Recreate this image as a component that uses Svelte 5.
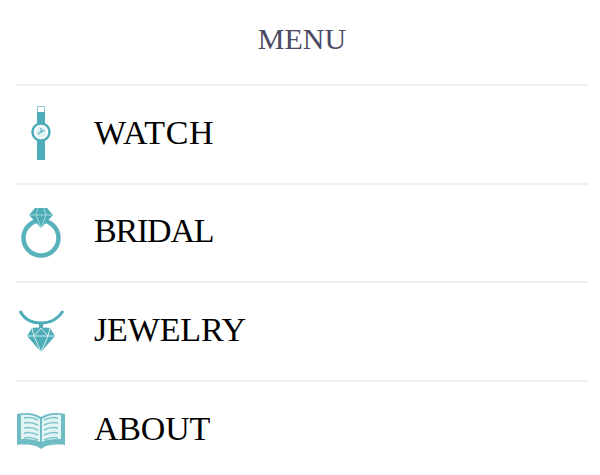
<script>
    // tracking nudges each label to the reference's width
    const items = [
        {name: 'WATCH', tracking: 0.6},
        {name: 'BRIDAL', tracking: -1.2},
        {name: 'JEWELRY', tracking: -0.15},
        {name: 'ABOUT', tracking: -0.2},
    ]
    const bookLines = [20, 25, 30, 35, 40]
</script>

<main>
    <h1>MENU</h1>
    <ul>
        {#each items as item, index (item.name)}
            <li>
                <span class="icon">
                    {#if index === 0}
                        <svg width="50" height="56" viewBox="-1 0 50 56">
                            <rect x="20.500" y="1.500" width="7" height="6" fill="#fff" stroke="#8ccbd1" stroke-width="1"/>
                            <rect x="20" y="7" width="8" height="14" fill="#4fadb8"/>
                            <rect x="20" y="34" width="8" height="21" fill="#4fadb8"/>
                            <circle cx="24" cy="27" r="8.500" fill="#fff" stroke="#4fadb8" stroke-width="2.500"/>
                            <circle cx="24" cy="27" r="5.500" fill="#dff2f3"/>
                            <path d="M24 23v4l3.500-2M24 27l-3 2" fill="none" stroke="#4fadb8" stroke-width="1.100"/>
                        </svg>
                    {:else if index === 1}
                        <svg width="50" height="56" viewBox="-1 0 50 56">
                            <circle cx="24" cy="35" r="17.500" fill="none" stroke="#58b1bb" stroke-width="4.500"/>
                            <path d="M18 5h12l6 7-12 13-12-13z" fill="#4fadb8"/>
                            <path d="M12 12h24M19 12l5 13 5-13M19 12l2-7M29 12l-2-7" fill="none" stroke="#a9dade" stroke-width="0.900"/>
                        </svg>
                    {:else if index === 2}
                        <svg width="50" height="56" viewBox="-1 0 50 56">
                            <path d="M3 9c4 8 12 12 21 12s17-4 22-12" fill="none" stroke="#4fadb8" stroke-width="2.800"/>
                            <rect x="22" y="21" width="4" height="5" fill="#4fadb8"/>
                            <path d="M15 26q5-1 9 0q4-1 9 0l5 8-14 16-14-16z" fill="#4fadb8"/>
                            <path d="M10 34h28M17 34l7 16 7-16M17 34l7-8 7 8M15 26l2 8M33 26l-2 8" fill="none" stroke="#d5eef0" stroke-width="1"/>
                        </svg>
                    {:else}
                        <svg width="50" height="56" viewBox="-1 0 50 56">
                            <path d="M0 13c9-2 18-1 24 3 6-4 15-5 24-3v31c-8-1-17 0-21 2l-3 2-3-2c-4-2-13-3-21-2z" fill="#6fbcc5"/>
                            <path d="M4 14c7-1 14 0 19 4v23c-5-3-12-3-19-3zM44 14c-7-1-14 0-19 4v23c5-3 12-3 19-3z" fill="#e3f4f5"/>
                            {#each bookLines as y (y)}
                                <path d="M7 {y - 3}c5-1 10 0 14 2M41 {y - 3}c-5-1-10 0-14 2" fill="none" stroke="#7cc4cb" stroke-width="1.500"/>
                            {/each}
                        </svg>
                    {/if}
                </span>
                <span class="name" style="letter-spacing: {item.tracking}px;">{item.name}</span>
            </li>
        {/each}
    </ul>
</main>

<style>
    :global(body) {
        margin: 0;
        background: #fff;
    }

    main {
        height: 475px;
        overflow: hidden;
        padding: 0 12px 0 16px;
        box-sizing: border-box;
        font-family: "Liberation Serif", serif;
    }

    h1 {
        margin: 0;
        height: 86px;
        line-height: 78px;
        box-sizing: border-box;
        text-align: center;
        font-size: 30px;
        font-weight: 400;
        color: #4a4a64;
        border-bottom: 2px solid #efefef;
    }

    ul {
        margin: 0;
        padding: 0;
        list-style: none;
    }

    li {
        height: 98.67px;
        display: flex;
        align-items: center;
        gap: 28px;
        padding-bottom: 3px;
        box-sizing: border-box;
        border-bottom: 2px solid #efefef;
    }

    .icon {
        width: 50px;
        height: 56px;
        display: block;
    }

    .icon svg {
        display: block;
        filter: blur(0.4px);
    }

    .name {
        font-size: 34px;
        color: #000;
    }
</style>
